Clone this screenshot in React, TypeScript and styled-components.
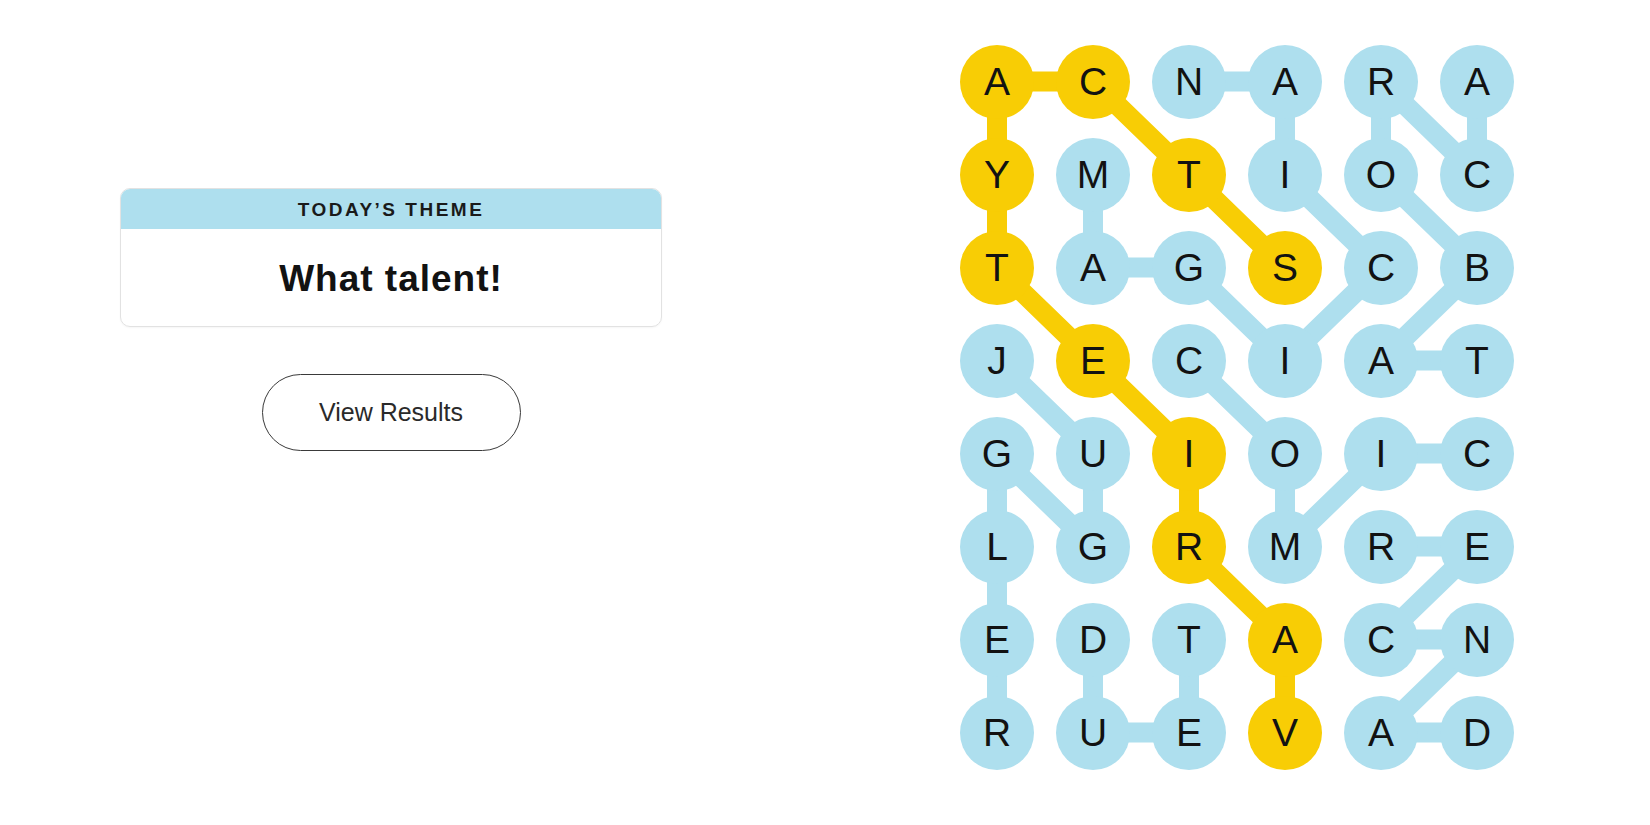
import React from "react";
import styled, { createGlobalStyle } from "styled-components";

const GlobalStyle = createGlobalStyle`
  html, body { margin: 0; padding: 0; background: #ffffff; }
  body { font-family: "Liberation Sans", Arial, sans-serif; color: #121212; }
`;

const BLUE = "#aedfee";
const YELLOW = "#f8cd05";
const COL_W = 96;
const ROW_H = 93;
const DOT = 74;

const ROWS = ["ACNARA", "YMTIOC", "TAGSCB", "JECIAT", "GUIOIC", "LGRMRE", "EDTACN", "RUEVAD"];

type Pt = [number, number];

const SPANGRAM: Pt[] = [[7, 3], [6, 3], [5, 2], [4, 2], [3, 1], [2, 0], [1, 0], [0, 0], [0, 1], [1, 2], [2, 3]];
const WORDS: Pt[][] = [
  [[1, 1], [2, 1], [2, 2], [3, 3], [2, 4], [1, 3], [0, 3], [0, 2]],
  [[0, 5], [1, 5], [0, 4], [1, 4], [2, 5], [3, 4], [3, 5]],
  [[3, 0], [4, 1], [5, 1], [4, 0], [5, 0], [6, 0], [7, 0]],
  [[6, 1], [7, 1], [7, 2], [6, 2]],
  [[7, 5], [7, 4], [6, 5], [6, 4], [5, 5], [5, 4]],
  [[3, 2], [4, 3], [5, 3], [4, 4], [4, 5]],
];

const spanSet = new Set(SPANGRAM.map(([r, c]) => `${r},${c}`));

const Page = styled.main`
  display: grid;
  grid-template-columns: 782px 576px;
  column-gap: 167px;
  padding-top: 35px;
  min-height: 825px;
  box-sizing: border-box;
`;

const LeftPane = styled.section`
  display: flex;
  flex-direction: column;
  align-items: center;
  padding-top: 153px;
`;

const ThemeCard = styled.div`
  width: 542px;
  border: 1px solid #e2e2e2;
  border-radius: 10px;
  overflow: hidden;
  box-shadow: 0 1px 2px rgba(0, 0, 0, 0.04);
  box-sizing: border-box;
`;

const ThemeHeader = styled.div`
  height: 40px;
  background: ${BLUE};
  display: flex;
  align-items: center;
  justify-content: center;
  font-family: "Liberation Sans", Arial, sans-serif;
  font-weight: 700;
  font-size: 19px;
  letter-spacing: 2.5px;
  color: #1a1a1a;
  padding-top: 2px;
  box-sizing: border-box;
`;

const ThemeBody = styled.div`
  height: 97px;
  display: flex;
  align-items: center;
  justify-content: center;
  font-family: "Liberation Sans", Arial, sans-serif;
  font-weight: 700;
  font-size: 37px;
  letter-spacing: 1px;
  color: #121212;
  padding-top: 2px;
  box-sizing: border-box;
`;

const ResultsButton = styled.button`
  margin-top: 47px;
  width: 259px;
  height: 77px;
  border: 1px solid #3a3a3a;
  border-radius: 40px;
  background: #ffffff;
  font-family: "Liberation Sans", Arial, sans-serif;
  font-size: 25px;
  color: #2a2a2a;
  cursor: pointer;
  padding: 0;
`;

const Board = styled.div`
  position: relative;
  width: ${COL_W * 6}px;
  height: ${ROW_H * 8}px;
`;

const Links = styled.svg`
  position: absolute;
  inset: 0;
  z-index: 0;
`;

const LetterGrid = styled.div`
  position: relative;
  z-index: 1;
  display: grid;
  grid-template-columns: repeat(6, ${COL_W}px);
  grid-template-rows: repeat(8, ${ROW_H}px);
`;

const Cell = styled.div`
  display: flex;
  align-items: center;
  justify-content: center;
`;

const Dot = styled.div<{ $span: boolean }>`
  width: ${DOT}px;
  height: ${DOT}px;
  border-radius: 50%;
  background: ${(p) => (p.$span ? YELLOW : BLUE)};
  display: flex;
  align-items: center;
  justify-content: center;
  font-family: "Liberation Sans", Arial, sans-serif;
  font-size: 39px;
  font-weight: 400;
  color: #121212;
  line-height: 1;
`;

const toPoints = (path: Pt[]) =>
  path.map(([r, c]) => `${c * COL_W + COL_W / 2},${r * ROW_H + ROW_H / 2}`).join(" ");

export default function App() {
  return (
    <>
      <GlobalStyle />
      <Page>
        <LeftPane>
          <ThemeCard>
            <ThemeHeader>TODAY’S THEME</ThemeHeader>
            <ThemeBody>What talent!</ThemeBody>
          </ThemeCard>
          <ResultsButton type="button">View Results</ResultsButton>
        </LeftPane>
        <Board>
          <Links width={COL_W * 6} height={ROW_H * 8} viewBox={`0 0 ${COL_W * 6} ${ROW_H * 8}`}>
            {WORDS.map((w, i) => (
              <polyline
                key={i}
                points={toPoints(w)}
                fill="none"
                stroke={BLUE}
                strokeWidth={20}
                strokeLinejoin="round"
                strokeLinecap="round"
              />
            ))}
            <polyline
              points={toPoints(SPANGRAM)}
              fill="none"
              stroke={YELLOW}
              strokeWidth={20}
              strokeLinejoin="round"
              strokeLinecap="round"
            />
          </Links>
          <LetterGrid>
            {ROWS.map((row, r) =>
              row.split("").map((ch, c) => (
                <Cell key={`${r}-${c}`}>
                  <Dot $span={spanSet.has(`${r},${c}`)}>{ch}</Dot>
                </Cell>
              ))
            )}
          </LetterGrid>
        </Board>
      </Page>
    </>
  );
}
